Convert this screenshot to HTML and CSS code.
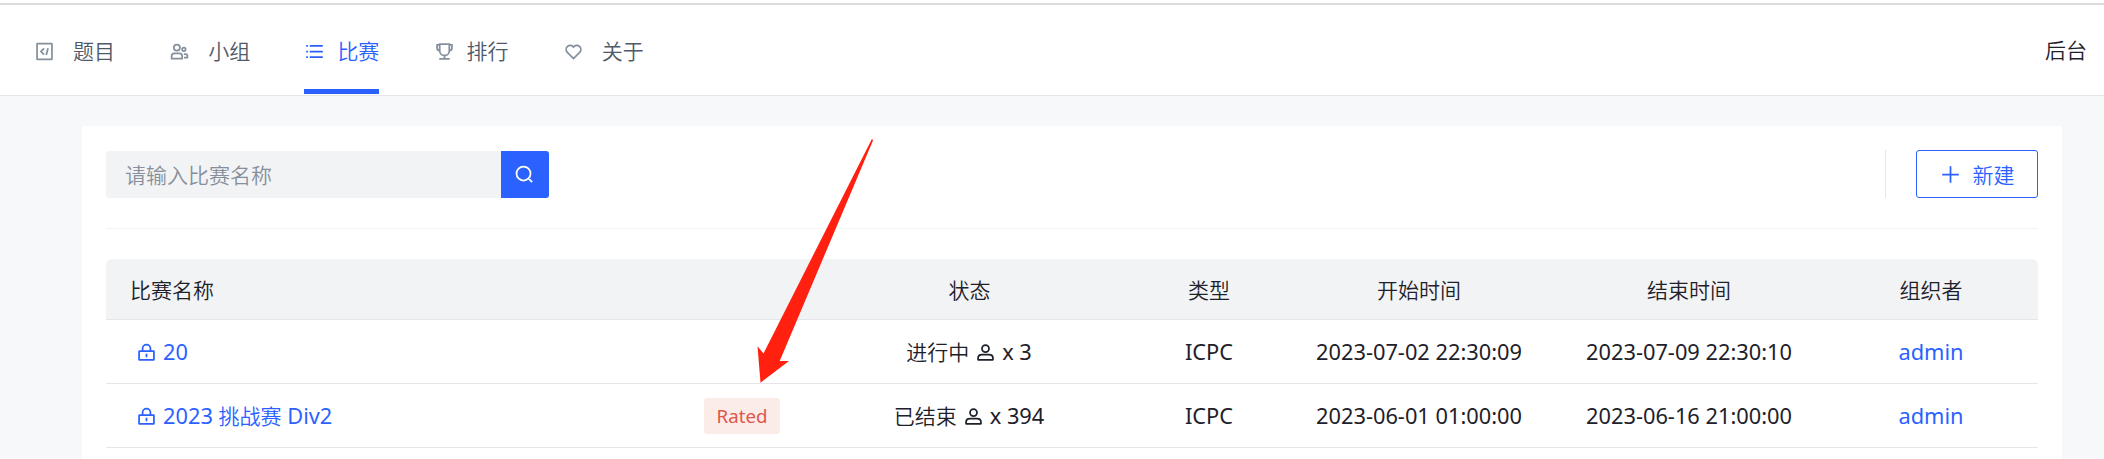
FILE: index.html
```
<!DOCTYPE html>
<html lang="zh-CN">
<head>
<meta charset="utf-8">
<title>比赛</title>
<link rel="stylesheet" href="styles.css">
</head>
<body>
<svg width="0" height="0" class="sprite">
  <symbol id="i-code" viewBox="0 0 48 48"><path d="M23.07 17 16 24.07l7.07 7.07m9-14.62-4.14 15.45M8 42h32a1 1 0 0 0 1-1V7a1 1 0 0 0-1-1H8a1 1 0 0 0-1 1v34a1 1 0 0 0 1 1Z"/></symbol>
  <symbol id="i-group" viewBox="0 0 48 48"><circle cx="18" cy="15" r="7"/><circle cx="34" cy="19" r="4"/><path d="M6 34a6 6 0 0 1 6-6h12a6 6 0 0 1 6 6v6H6v-6ZM34 30h4a4 4 0 0 1 4 4v4h-8"/></symbol>
  <symbol id="i-list" viewBox="0 0 48 48"><path d="M13 24h30M5 11h4m4 26h30M13 11h30M5 24h4M5 37h4"/></symbol>
  <symbol id="i-trophy" viewBox="0 0 48 48"><path d="M24 33c-6.075 0-11-4.925-11-11m11 11c6.075 0 11-4.925 11-11M24 33v8M13 22V7h22v15m-22 0V9H7v7a6 6 0 0 0 6 6Zm22 0V9h6v7a6 6 0 0 1-6 6ZM12 41h24"/></symbol>
  <symbol id="i-heart" viewBox="0 0 48 48"><path d="M38.083 12.912a9.223 9.223 0 0 1 0 13.043L24 40.038 9.917 25.955a9.223 9.223 0 0 1 13.044-13.043L24 13.95l1.04-1.04a9.223 9.223 0 0 1 13.043 0Z"/></symbol>
  <symbol id="i-search" viewBox="0 0 48 48"><path d="M33.07 33.07a16 16 0 1 0-22.63-22.63 16 16 0 0 0 22.63 22.63Zm0 0 8.49 8.49"/></symbol>
  <symbol id="i-plus" viewBox="0 0 48 48"><path d="M5 24h38M24 5v38"/></symbol>
  <symbol id="i-lock" viewBox="0 0 48 48"><rect x="7" y="21" width="34" height="20" rx="1"/><path d="M15 21v-6a9 9 0 1 1 18 0v6M24 35v-8"/></symbol>
  <symbol id="i-user" viewBox="0 0 48 48"><path d="M7 37c0-4.97 4.03-8 9-8h16c4.97 0 9 3.03 9 8v3a1 1 0 0 1-1 1H8a1 1 0 0 1-1-1v-3Z"/><circle cx="24" cy="15" r="8"/></symbol>
</svg>

<header class="navbar">
  <nav class="menu">
    <a class="item wide"><svg class="icon"><use href="#i-code"/></svg><span>题目</span></a>
    <a class="item wide"><svg class="icon"><use href="#i-group"/></svg><span>小组</span></a>
    <a class="item active"><svg class="icon"><use href="#i-list"/></svg><span>比赛</span></a>
    <a class="item"><svg class="icon"><use href="#i-trophy"/></svg><span>排行</span></a>
    <a class="item wide"><svg class="icon"><use href="#i-heart"/></svg><span>关于</span></a>
  </nav>
  <a class="backstage">后台</a>
</header>

<main class="card">
  <div class="toolbar">
    <div class="search">
      <div class="search-input">请输入比赛名称</div>
      <div class="search-button"><svg class="icon"><use href="#i-search"/></svg></div>
    </div>
    <div class="actions">
      <div class="create"><svg class="icon"><use href="#i-plus"/></svg><span>新建</span></div>
    </div>
  </div>

  <div class="table">
    <div class="row head">
      <div class="cell name">比赛名称</div>
      <div class="cell">状态</div>
      <div class="cell">类型</div>
      <div class="cell">开始时间</div>
      <div class="cell">结束时间</div>
      <div class="cell">组织者</div>
    </div>
    <div class="row">
      <div class="cell name"><a class="link title"><svg class="icon"><use href="#i-lock"/></svg><span class="latin">20</span></a></div>
      <div class="cell status"><span>进行中</span><svg class="icon"><use href="#i-user"/></svg><span class="latin">x 3</span></div>
      <div class="cell latin">ICPC</div>
      <div class="cell latin">2023-07-02 22:30:09</div>
      <div class="cell latin">2023-07-09 22:30:10</div>
      <div class="cell latin"><a class="link">admin</a></div>
    </div>
    <div class="row">
      <div class="cell name"><a class="link title"><svg class="icon"><use href="#i-lock"/></svg><span><span class="latin">2023 </span>挑战赛<span class="latin"> Div2</span></span></a><span class="tag">Rated</span></div>
      <div class="cell status"><span>已结束</span><svg class="icon"><use href="#i-user"/></svg><span class="latin">x 394</span></div>
      <div class="cell latin">ICPC</div>
      <div class="cell latin">2023-06-01 01:00:00</div>
      <div class="cell latin">2023-06-16 21:00:00</div>
      <div class="cell latin"><a class="link">admin</a></div>
    </div>
  </div>
</main>

<svg class="pointer" viewBox="0 0 34 246" width="34" height="246"><path d="M115 .8 6.5 215.4.5 208.3 3.5 244.7 32 223H22.7L116 2.5Z"/></svg>
</body>
</html>
```
FILE: styles.css
```
* { box-sizing: border-box; }
body {
  margin: 0;
  height: 459px;
  overflow: hidden;
  background: #f7f8fa;
  color: #1d2129;
  font: 350 21px/32px "Noto Sans CJK SC DemiLight", "Noto Sans CJK SC", sans-serif;
}
.sprite { position: absolute; }
.icon {
  width: 21px;
  height: 21px;
  flex: none;
  fill: none;
  stroke: currentColor;
  stroke-width: 4;
}
.latin { font: 400 21.8px/32px "Noto Sans", sans-serif; }

.navbar {
  display: flex;
  justify-content: space-between;
  height: 96px;
  padding: 0 17px 0 34px;
  background: linear-gradient(#fff 3px, #dcdcdc 3px, #dcdcdc 5px, #fff 5px);
  border-bottom: 1px solid #e5e6eb;
}
.menu { display: flex; gap: 54.2px; }
.item {
  display: flex;
  align-items: center;
  gap: 12px;
  height: 94px;
  padding-top: 10px;
  border-bottom: 5px solid transparent;
  color: #4e5969;
}
.item.wide { gap: 18px; }
.item .icon { margin-top: 3px; color: #86909c; }
.item.active { border-color: #2b62ff; color: #2b62ff; }
.item.active .icon { color: inherit; }
.backstage { padding-top: 33px; }

.card {
  width: 1980px;
  height: 340px;
  margin: 30px 0 0 82px;
  padding: 24px;
  background: #fff;
}
.toolbar {
  display: flex;
  align-items: center;
  justify-content: space-between;
  height: 79px;
  padding-bottom: 30px;
  border-bottom: 1px solid #f2f3f5;
}
.search { display: flex; height: 47px; margin-top: 1px; }
.search-input {
  width: 395px;
  padding: 7px 19px;
  border-radius: 3px 0 0 3px;
  background: #f2f3f5;
  color: #86909c;
}
.search-button {
  display: grid;
  place-items: center;
  width: 48px;
  padding-right: 2px;
  border-radius: 0 3px 3px 0;
  background: #2b62ff;
  color: #fff;
}
.actions { padding-left: 30px; border-left: 1px solid #e5e6eb; }
.create {
  display: flex;
  align-items: center;
  justify-content: center;
  gap: 12px;
  width: 122px;
  height: 48px;
  border: 1px solid #2b62ff;
  border-radius: 3px;
  color: #2b62ff;
}

.table { margin-top: 30px; }
.row {
  display: grid;
  grid-template-columns: 699px 329px 150px 270px 270px 214px;
  height: 64px;
  border-bottom: 1px solid #e5e6eb;
}
.head {
  height: 61px;
  border-radius: 6px 6px 0 0;
  background: #f2f3f5;
}
.cell { display: flex; align-items: center; justify-content: center; }
.cell.name { justify-content: space-between; padding: 0 25px 0 24px; }
.link { color: #2b62ff; }
.title { display: flex; align-items: center; gap: 6px; padding-left: 6px; }
.title .icon, .status .icon { margin-top: 2px; }
.status { gap: 6px; padding-right: 1px; }
.status > span:first-child { margin-top: -2px; }
.tag {
  width: 76px;
  height: 36px;
  border-radius: 3px;
  background: #fcece8;
  color: #e0564b;
  font: 400 18.7px/35px "Noto Sans", sans-serif;
  text-align: center;
}

.pointer {
  position: absolute;
  left: 757px;
  top: 138px;
  overflow: visible;
  fill: #ff2010;
}
```
